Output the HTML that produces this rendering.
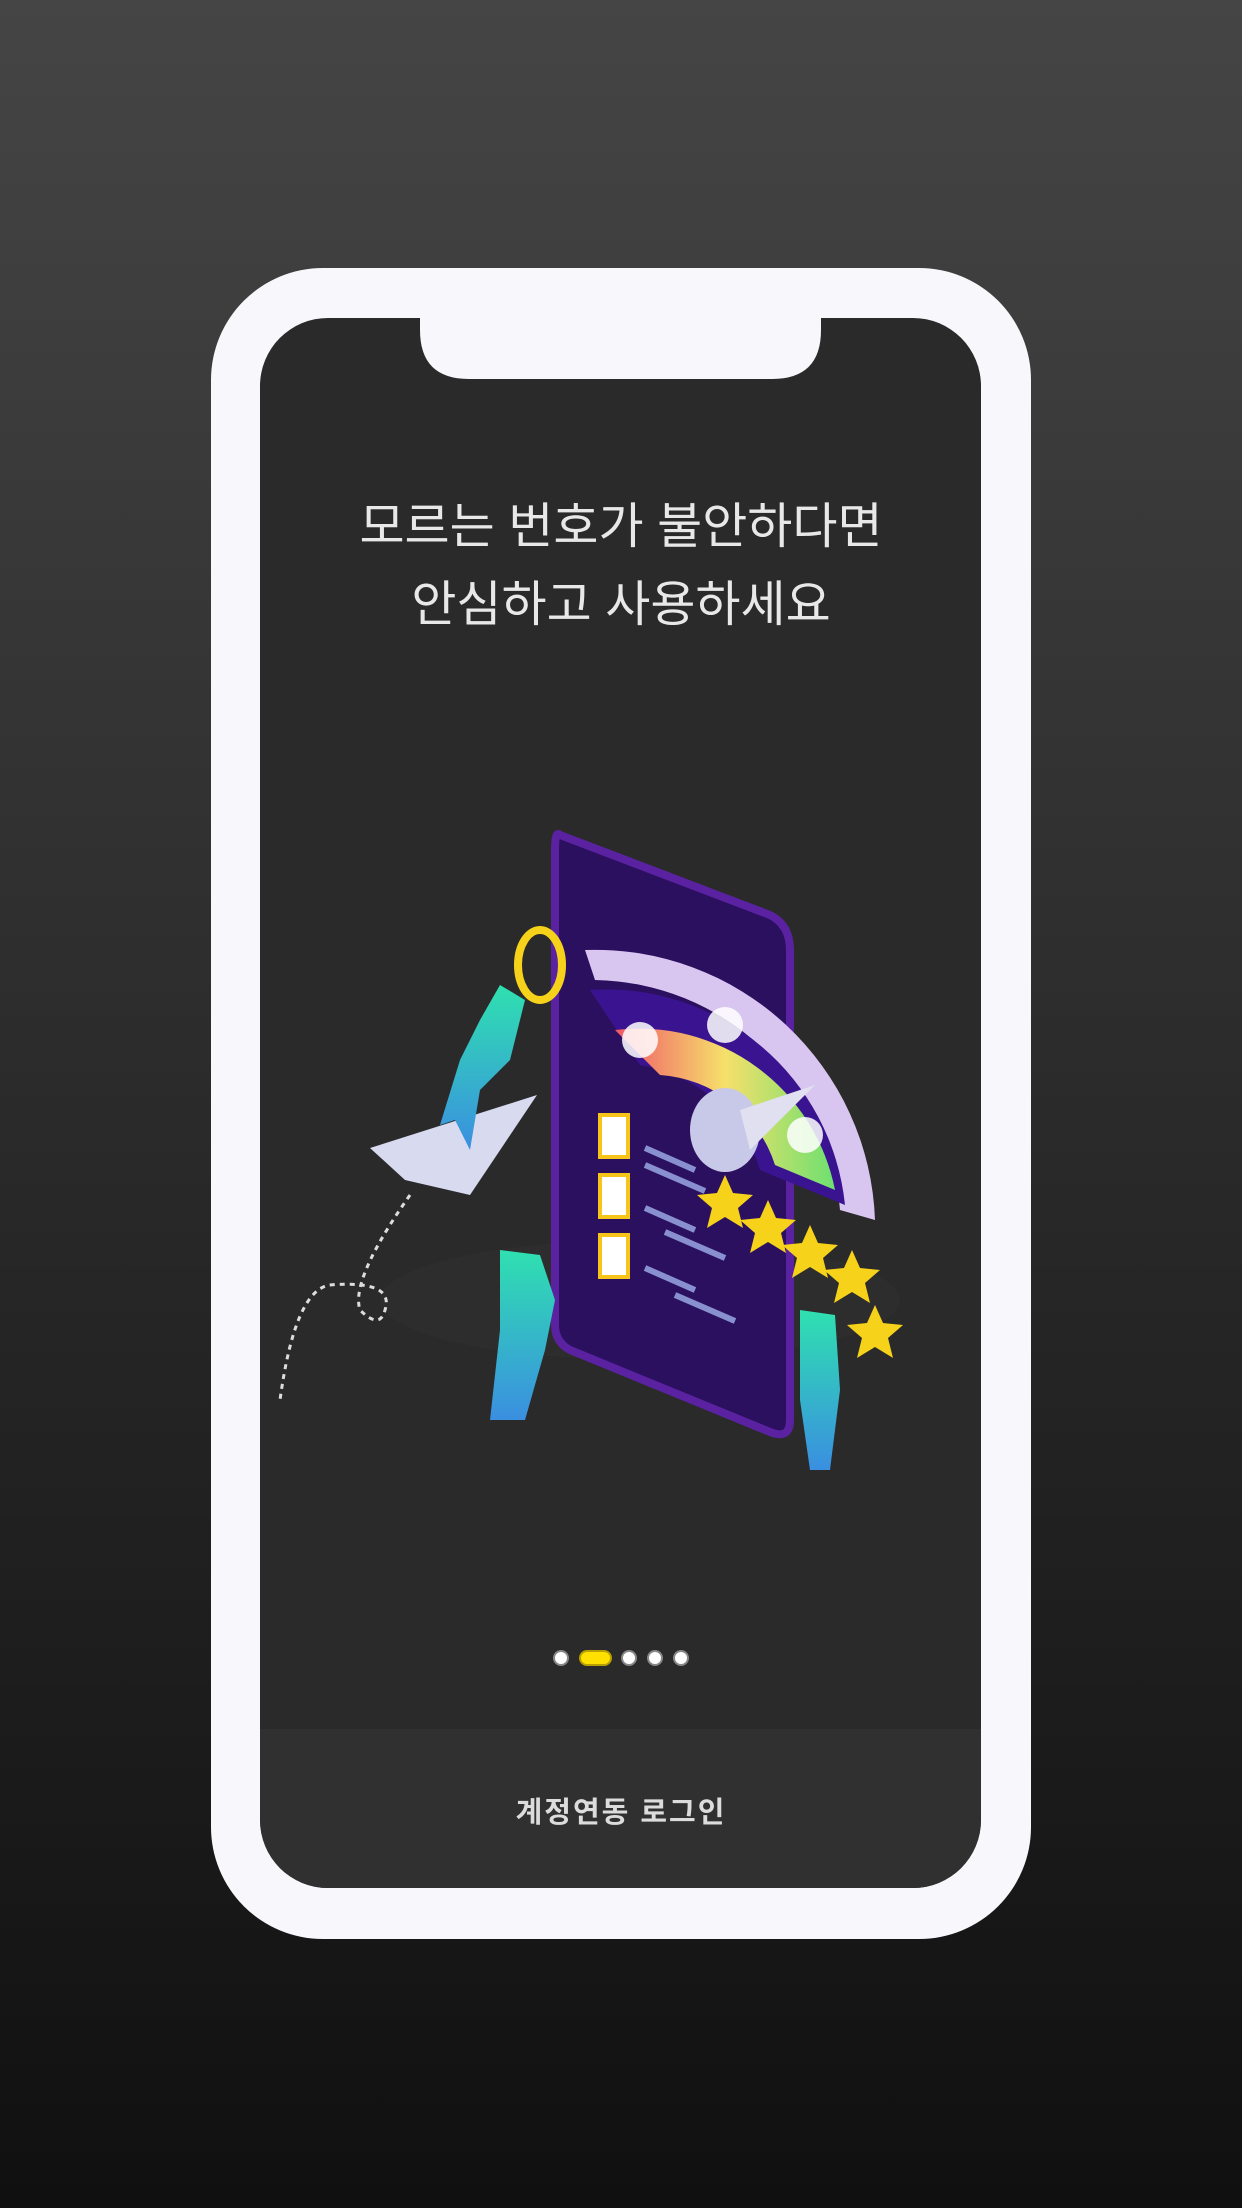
<!DOCTYPE html>
<html><head><meta charset="utf-8"><style>
html,body{margin:0;padding:0;width:1242px;height:2208px;overflow:hidden;background:#222}
svg{display:block}
</style></head><body>
<svg width="1242" height="2208" viewBox="0 0 1242 2208" xmlns="http://www.w3.org/2000/svg">
<defs>
<linearGradient id="bg" x1="0" y1="0" x2="0" y2="1"><stop offset="0" stop-color="#454545"/><stop offset="1" stop-color="#101010"/></linearGradient>
<linearGradient id="g1" x1="0" y1="0" x2="1" y2="0"><stop offset="0" stop-color="#f0566a"/><stop offset=".5" stop-color="#f6e06a"/><stop offset="1" stop-color="#6de070"/></linearGradient>
<linearGradient id="tq" x1="0" y1="0" x2="0" y2="1"><stop offset="0" stop-color="#2fe0b0"/><stop offset="1" stop-color="#3a8fe0"/></linearGradient>
</defs>
<rect width="1242" height="2208" fill="url(#bg)"/>
<rect x="211" y="268" width="820" height="1671" rx="112" fill="#f8f8fc"/>
<rect x="260" y="318" width="721" height="1570" rx="68" fill="#2a2a2a"/>
<path d="M260 1729 H981 V1820 a68 68 0 0 1 -68 68 H328 a68 68 0 0 1 -68 -68Z" fill="#303030"/>
<path d="M420 316 H821 V330 q0 49 -49 49 H469 q-49 0 -49 -49Z" fill="#f8f8fc"/>
<g font-family="'Liberation Sans','Noto Sans CJK KR',sans-serif" text-anchor="middle">
<text x="621" y="543" font-size="49" fill="#e8e8e8">모르는 번호가 불안하다면</text>
<text x="621" y="621" font-size="49" fill="#e8e8e8">안심하고 사용하세요</text>
<text x="621" y="1822" font-size="29" font-weight="bold" fill="#dcdcdc" letter-spacing="2">계정연동 로그인</text>
</g>
<g>
<ellipse cx="640" cy="1300" rx="260" ry="60" fill="#2d2d2d"/>
<path d="M560 835 L770 915 Q790 925 790 950 L790 1420 Q790 1440 770 1432 L570 1350 Q555 1342 555 1325 L555 850 Q555 830 560 835Z" fill="#2c1060" stroke="#5a22a0" stroke-width="8"/>
<path d="M585 950 A 280 280 0 0 1 875 1220 L840 1210 A 250 250 0 0 0 595 980 Z" fill="#d8c6f0"/>
<path d="M590 990 A 240 240 0 0 1 845 1205 L760 1170 A 150 150 0 0 0 640 1065 Z" fill="#3a1490"/>
<path d="M615 1030 A 200 200 0 0 1 835 1190 L775 1165 A 130 130 0 0 0 660 1075 Z" fill="url(#g1)"/>
<circle cx="640" cy="1040" r="18" fill="#fff" opacity=".85"/>
<circle cx="725" cy="1025" r="18" fill="#fff" opacity=".85"/>
<circle cx="805" cy="1135" r="18" fill="#fff" opacity=".85"/>
<ellipse cx="725" cy="1130" rx="35" ry="42" fill="#c8c8e8"/>
<path d="M740 1110 L815 1085 L750 1150Z" fill="#e0e0f0"/>
<g fill="#f7d21a">
<path d="M725 1175 l8 18 20 2 -15 13 5 20 -18 -11 -18 11 5 -20 -15 -13 20 -2z"/>
<path d="M768 1200 l8 18 20 2 -15 13 5 20 -18 -11 -18 11 5 -20 -15 -13 20 -2z"/>
<path d="M810 1225 l8 18 20 2 -15 13 5 20 -18 -11 -18 11 5 -20 -15 -13 20 -2z"/>
<path d="M852 1250 l8 18 20 2 -15 13 5 20 -18 -11 -18 11 5 -20 -15 -13 20 -2z"/>
<path d="M875 1305 l8 18 20 2 -15 13 5 20 -18 -11 -18 11 5 -20 -15 -13 20 -2z"/>
</g>
<g stroke="#f7c51a" stroke-width="4" fill="#fff">
<rect x="600" y="1115" width="28" height="42"/><rect x="600" y="1175" width="28" height="42"/><rect x="600" y="1235" width="28" height="42"/>
</g>
<g stroke="#8890d0" stroke-width="6">
<path d="M645 1148 l50 22 M645 1165 l60 26"/><path d="M645 1208 l50 22 M665 1232 l60 26"/><path d="M645 1268 l50 22 M675 1295 l60 26"/>
</g>
<ellipse cx="540" cy="965" rx="22" ry="35" fill="none" stroke="#f7d21a" stroke-width="8"/>
<path d="M370 1148 L537 1095 L470 1195 L405 1180Z" fill="#d8daf0"/>
<path d="M500 985 L525 1000 L510 1060 L480 1090 L470 1150 L455 1120 L440 1125 L460 1060 L480 1020Z" fill="url(#tq)"/>
<path d="M500 1250 L540 1255 L555 1300 L545 1350 L525 1420 L490 1420 L500 1330Z" fill="url(#tq)"/>
<path d="M800 1310 L835 1315 L840 1390 L830 1470 L810 1470 L800 1400Z" fill="url(#tq)"/>
<path d="M410 1195 Q350 1280 360 1310 Q380 1330 385 1310 Q395 1280 330 1285 Q295 1290 280 1400" fill="none" stroke="#ddd" stroke-width="3" stroke-dasharray="5 5"/>
</g>
<g fill="#fff" stroke="#888" stroke-width="2">
<circle cx="561" cy="1658" r="7"/><circle cx="629" cy="1658" r="7"/><circle cx="655" cy="1658" r="7"/><circle cx="681" cy="1658" r="7"/>
</g>
<rect x="580" y="1651" width="31" height="14" rx="7" fill="#ffe000" stroke="#b8a000" stroke-width="2"/>
</svg>
</body></html>
